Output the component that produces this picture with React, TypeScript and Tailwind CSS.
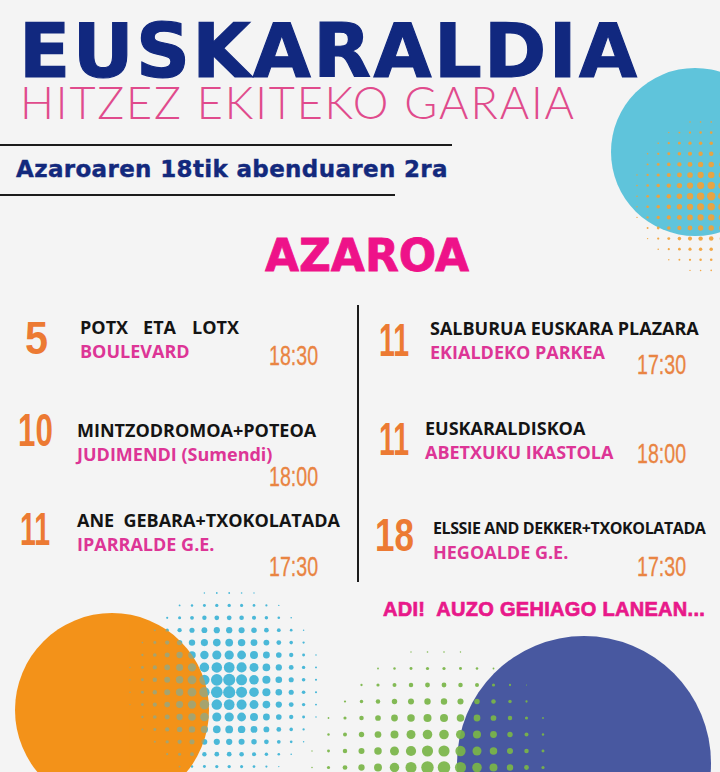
import React from "react";

type Dot = { x: number; y: number; r: number };

function field(
  x0: number,
  y0: number,
  step: number,
  nx: number,
  ny: number,
  cx: number,
  cy: number,
  R: number,
  maxR: number
): Dot[] {
  const out: Dot[] = [];
  for (let i = 0; i < nx; i++) {
    for (let j = 0; j < ny; j++) {
      const x = x0 + i * step;
      const y = y0 + j * step;
      const d = Math.hypot(x - cx, y - cy);
      const r = maxR * (1 - d / R);
      if (r > 0.6) out.push({ x, y, r });
    }
  }
  return out;
}

const orangeDots = field(637, 122, 10.6, 9, 16, 711, 196, 92, 4.2);
const cyanDots = field(130, 593, 12.4, 17, 15, 226, 686, 108, 6.5);
const greenDots = field(312, 652, 16.5, 15, 8, 436, 775, 140, 6.8);

function Background() {
  return (
    <svg className="absolute inset-0" width="720" height="772" viewBox="0 0 720 772">
      <defs>
        <clipPath id="clipOrange">
          <circle cx="112" cy="710" r="97" />
        </clipPath>
      </defs>
      <circle cx="695" cy="152" r="84" fill="#5fc4db" />
      <g fill="#f2a23a" opacity="0.92">
        {orangeDots.map((d, i) => (
          <circle key={i} cx={d.x} cy={d.y} r={d.r} />
        ))}
      </g>
      <g fill="#4ab8d8">
        {cyanDots.map((d, i) => (
          <circle key={i} cx={d.x} cy={d.y} r={d.r} />
        ))}
      </g>
      <circle cx="112" cy="710" r="97" fill="#f39219" />
      <g fill="#4ab8d8" opacity="0.45" clipPath="url(#clipOrange)">
        {cyanDots.map((d, i) => (
          <circle key={i} cx={d.x} cy={d.y} r={d.r} />
        ))}
      </g>
      <circle cx="584" cy="763" r="127" fill="#4858a0" />
      <g fill="#7ab648" opacity="0.92">
        {greenDots.map((d, i) => (
          <circle key={i} cx={d.x} cy={d.y} r={d.r} />
        ))}
      </g>
    </svg>
  );
}

type EventProps = {
  wrap: string;
  numBox: string;
  numScale: string;
  num: string;
  title: React.ReactNode;
  titleCls?: string;
  venue: string;
  time: string;
  timeMt: string;
  pr: string;
};

function Event({ wrap, numBox, numScale, num, title, titleCls, venue, time, timeMt, pr }: EventProps) {
  return (
    <div className={"flex items-start " + wrap}>
      <div className={"shrink-0 " + numBox}>
        <span
          className={
            "inline-block origin-left font-['Liberation_Sans',Arial,sans-serif] font-bold text-[46px] leading-none text-[#ec7a33] " +
            numScale
          }
        >
          {num}
        </span>
      </div>
      <div className={"flex-1 min-w-0 " + pr}>
        <div
          className={
            "whitespace-pre font-['Open_Sans',sans-serif] font-bold leading-[24px] text-[#141414] " +
            (titleCls ?? "text-[18px]")
          }
        >
          {title}
        </div>
        <div className="whitespace-nowrap font-['Open_Sans',sans-serif] font-bold text-[18px] leading-[24px] text-[#dd3596]">
          {venue}
        </div>
        <div className={"text-right " + timeMt}>
          <span className="inline-block origin-right scale-x-[0.7] font-['Liberation_Sans',Arial,sans-serif] text-[28px] leading-[28px] text-[#e98442] [-webkit-text-stroke:0.3px_#e98442]">
            {time}
          </span>
        </div>
      </div>
    </div>
  );
}

export default function App() {
  return (
    <div className="relative w-[720px] h-[772px] overflow-hidden bg-[#f4f4f4]">
      <Background />
      <div className="relative flex flex-col">
        <h1 className="pt-[18px] pl-[19px] font-['DejaVu_Sans',sans-serif] font-bold text-[75px] leading-[66px] tracking-[2.4px] text-[#11287f] [-webkit-text-stroke:1.2px_#11287f]">
          EUSKARALDIA
        </h1>
        <div className="pl-[20px] font-['Lato',sans-serif] font-light text-[45px] leading-[36px] tracking-[1.85px] text-[#e04b8c]">
          HITZEZ EKITEKO GARAIA
        </div>
        <div className="mt-[24px] h-[2px] w-[452px] bg-[#1b1b1b]" />
        <div className="mt-[12px] pl-[16px] font-['DejaVu_Sans',sans-serif] font-bold text-[23px] leading-none tracking-[0.35px] text-[#13297d] [-webkit-text-stroke:0.4px_#13297d]">
          Azaroaren 18tik abenduaren 2ra
        </div>
        <div className="mt-[13px] h-[2px] w-[395px] bg-[#1b1b1b]" />
        <div className="mt-[38px] pl-[14px] text-center font-['DejaVu_Sans',sans-serif] font-bold text-[44px] leading-none text-[#ee1289] [-webkit-text-stroke:0.8px_#ee1289]">
          AZAROA
        </div>
        <div className="mt-[27px] flex h-[277px]">
          <div className="w-[357px] shrink-0 min-w-0 pt-[10px] flex flex-col">
            <Event
              wrap="h-[106px]"
              numBox="w-[80px] pl-[25px]"
              numScale="scale-x-[0.9]"
              num="5"
              title={
                <>
                  POTX<span className="inline-block w-[15px]" />ETA<span className="inline-block w-[16px]" />LOTX
                </>
              }
              venue="BOULEVARD"
              time="18:30"
              timeMt="-mt-[21px]"
              pr="pr-[39px]"
            />
            <Event
              wrap="h-[93px]"
              numBox="w-[77px] pl-[18px] -mt-[11px]"
              numScale="scale-x-[0.68]"
              num="10"
              title="MINTZODROMOA+POTEOA"
              venue="JUDIMENDI (Sumendi)"
              time="18:00"
              timeMt="-mt-[3px]"
              pr="pr-[39px]"
            />
            <Event
              wrap=""
              numBox="w-[77px] pl-[20px] -mt-[2px]"
              numScale="scale-x-[0.62]"
              num="11"
              title="ANE  GEBARA+TXOKOLATADA"
              venue="IPARRALDE G.E."
              time="17:30"
              timeMt="-mt-[3px]"
              pr="pr-[39px]"
            />
          </div>
          <div className="w-[2px] shrink-0 bg-[#1b1b1b]" />
          <div className="flex-1 min-w-0 pt-[11px] flex flex-col">
            <Event
              wrap="h-[100px]"
              numBox="w-[71px] pl-[20px] mt-[1px]"
              numScale="scale-x-[0.62]"
              num="11"
              title="SALBURUA EUSKARA PLAZARA"
              venue="EKIALDEKO PARKEA"
              time="17:30"
              timeMt="-mt-[13px]"
              pr="pr-[34px]"
            />
            <Event
              wrap="h-[100px]"
              numBox="w-[66px] pl-[20px]"
              numScale="scale-x-[0.62]"
              num="11"
              title="EUSKARALDISKOA"
              venue="ABETXUKU IKASTOLA"
              time="18:00"
              timeMt="-mt-[24px]"
              pr="pr-[34px]"
            />
            <Event
              wrap=""
              numBox="w-[74px] pl-[16px] -mt-[4px]"
              numScale="scale-x-[0.76]"
              num="18"
              title="ELSSIE AND DEKKER+TXOKOLATADA"
              titleCls="text-[16px] tracking-[-0.4px]"
              venue="HEGOALDE G.E."
              time="17:30"
              timeMt="-mt-[11px]"
              pr="pr-[34px]"
            />
          </div>
        </div>
        <div className="mt-[17px] pl-[383px] whitespace-pre font-['Liberation_Sans',Arial,sans-serif] font-bold text-[20px] leading-none tracking-[0.3px] text-[#e8188a] [-webkit-text-stroke:0.7px_#e8188a]">
          ADI!  AUZO GEHIAGO LANEAN...
        </div>
      </div>
    </div>
  );
}
